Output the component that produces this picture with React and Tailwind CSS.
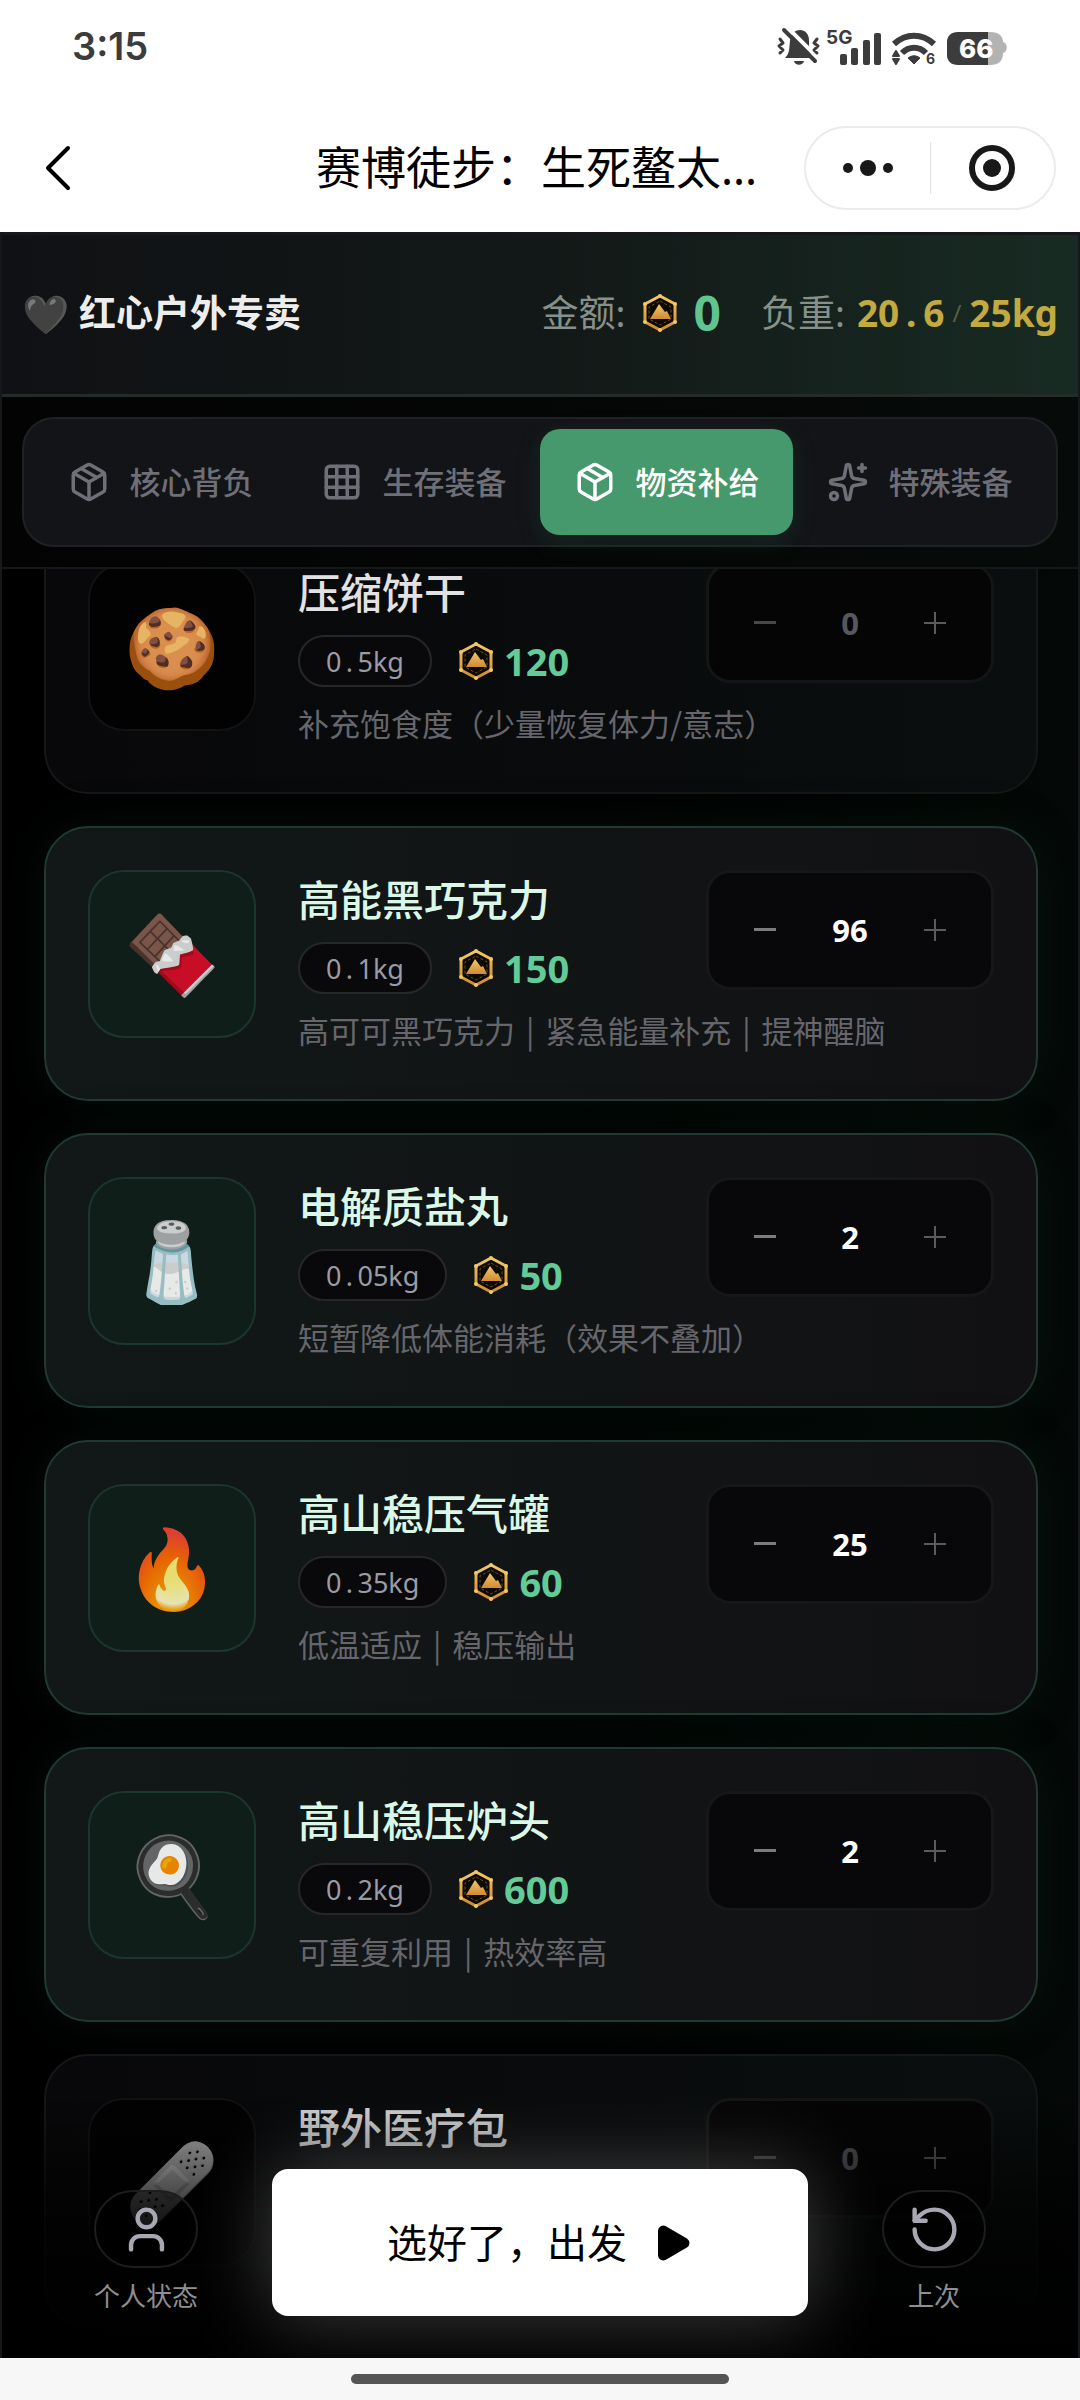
import { Fragment, useState } from "react";
import { Package, Grid3x3, Sparkles, User, RotateCcw, Play } from "lucide-react";

const TABS = [
  { id: "core", label: "核心背负", Icon: Package },
  { id: "survival", label: "生存装备", Icon: Grid3x3 },
  { id: "supply", label: "物资补给", Icon: Package },
  { id: "special", label: "特殊装备", Icon: Sparkles },
];

const ITEMS = [
  { name: "压缩饼干", emoji: "🍪", weight: "0.5", price: 120, count: 0, desc: ["补充饱食度（少量恢复体力/意志）"] },
  { name: "高能黑巧克力", emoji: "🍫", weight: "0.1", price: 150, count: 96, desc: ["高可可黑巧克力", "紧急能量补充", "提神醒脑"] },
  { name: "电解质盐丸", emoji: "🧂", weight: "0.05", price: 50, count: 2, desc: ["短暂降低体能消耗（效果不叠加）"] },
  { name: "高山稳压气罐", emoji: "🔥", weight: "0.35", price: 60, count: 25, desc: ["低温适应", "稳压输出"] },
  { name: "高山稳压炉头", emoji: "🍳", weight: "0.2", price: 600, count: 2, desc: ["可重复利用", "热效率高"] },
  { name: "野外医疗包", emoji: "🩹", count: 0, desc: [] },
];

function StatusBar() {
  return (
    <div className="flex h-23 shrink-0 items-center justify-between pr-16 pl-18 text-[#3c3c3c]">
      <span className="font-['Inter'] text-[38px] leading-none font-semibold">3:15</span>
      <svg className="h-10 w-60" viewBox="0 0 240 40" fill="none" aria-label="5G 66%">
        {/* muted bell */}
        <path d="M9 32c5-5 4-10 5-17C15 7 20 4 24 4c5 0 9 4 9 10 0 7 0 13 4 18z" fill="#3c3c3c" />
        <path d="M18 35h10c-1 5-9 5-10 0z" fill="#3c3c3c" />
        <path d="M11 1l31 31" stroke="#fff" strokeWidth="4" />
        <path d="M8 4l31 31" stroke="#3c3c3c" strokeWidth="4" strokeLinecap="round" />
        <path d="M4 13l3 4-4 3 4 4-3 3M41 13l-3 4 4 3-4 4 3 3" stroke="#3c3c3c" strokeWidth="3" strokeLinecap="round" strokeLinejoin="round" />
        <text x="50" y="18" fontFamily="Inter" fontSize="19" fontWeight="700" fill="#3c3c3c">5G</text>
        <rect x="64" y="28" width="7" height="11" rx="2" fill="#3c3c3c" />
        <rect x="75" y="22" width="7" height="17" rx="2" fill="#3c3c3c" />
        <rect x="87" y="14" width="7" height="25" rx="2" fill="#3c3c3c" />
        <rect x="98" y="7" width="7" height="32" rx="2" fill="#3c3c3c" />
        {/* wifi */}
        <path d="M118 18c12-11 28-11 40 0" stroke="#3c3c3c" strokeWidth="6" />
        <path d="M126 27c7-7 17-7 24 0" stroke="#3c3c3c" strokeWidth="6" />
        <path d="M132 32c4-3 8-3 12 0l-6 6z" fill="#3c3c3c" stroke="#3c3c3c" strokeLinejoin="round" />
        <path d="M120 25l3 5h-6zM120 38l3-5h-6z" fill="#3c3c3c" stroke="#3c3c3c" strokeWidth="2" strokeLinejoin="round" />
        <text x="150" y="38" fontFamily="Inter" fontSize="14" fontWeight="700" fill="#3c3c3c">6</text>
        {/* battery */}
        <path d="M207 6h7c9 0 13 4 13 10 5 1 5 10 0 11 0 8-4 12-13 12h-7z" fill="#b3b3b3" />
        <path d="M182 6h30v33h-30c-7 0-11-4-11-10V16c0-6 4-10 11-10z" fill="#3c3c3c" />
        <text x="183" y="32" fontFamily="Inter" fontSize="26" fontWeight="800" fill="#fff">66</text>
      </svg>
    </div>
  );
}

function TitleBar() {
  return (
    <div className="flex h-35 shrink-0 items-center justify-between pt-3 pr-6 pl-9">
      <button aria-label="返回" className="flex w-55">
        <svg className="h-13 w-12" viewBox="0 0 48 52" fill="none" stroke="#000" strokeWidth="4" strokeLinecap="round" strokeLinejoin="round">
          <path d="M32 6L12 26l20 20" />
        </svg>
      </button>
      <h1 className="flex-1 pl-15 text-[45px] leading-normal whitespace-nowrap text-black">赛博徒步：生死鳌太...</h1>
      <div className="flex h-21 w-63 items-center rounded-full border-2 border-[#ebebeb]">
        <button aria-label="更多" className="flex h-full flex-1 items-center justify-center">
          <svg className="h-5 w-13" viewBox="0 0 52 20" fill="#181818">
            <circle cx="6" cy="10" r="5" />
            <circle cx="26" cy="10" r="8" />
            <circle cx="46" cy="10" r="5" />
          </svg>
        </button>
        <span className="h-13 w-px bg-[#e2e2e2]" />
        <button aria-label="关闭" className="flex h-full flex-1 items-center justify-center">
          <svg className="size-12" viewBox="0 0 48 48" fill="none">
            <circle cx="24" cy="24" r="20" stroke="#181818" strokeWidth="6" />
            <circle cx="24" cy="24" r="9" fill="#181818" />
          </svg>
        </button>
      </div>
    </div>
  );
}

function Coin() {
  return (
    <svg className="h-10 w-9 shrink-0" viewBox="0 0 36 40" fill="none" aria-hidden="true">
      <defs>
        <linearGradient id="gold" x1="0" y1="0" x2="0" y2="1">
          <stop offset="0" stopColor="#f3c766" />
          <stop offset="1" stopColor="#d08a35" />
        </linearGradient>
      </defs>
      <path d="M18 3L33 11v18L18 37 3 29V11z" fill="#0c0a06" stroke="url(#gold)" strokeWidth="3" strokeLinejoin="round" />
      <path d="M18 8l11 6v12l-11 6-11-6V14z" stroke="#6e4c1c" strokeWidth="1" strokeDasharray="3 2" />
      <path d="M17 11l6 8 2-1 4 8H8z" fill="url(#gold)" />
      <g fill="#f3c766">
        <circle cx="18" cy="3" r="2" />
        <circle cx="33" cy="11" r="2" />
        <circle cx="33" cy="29" r="2" />
        <circle cx="18" cy="37" r="2" />
        <circle cx="3" cy="29" r="2" />
        <circle cx="3" cy="11" r="2" />
      </g>
    </svg>
  );
}

function ShopHeader() {
  return (
    <header className="flex h-[162px] shrink-0 items-center justify-between border-b-3 border-[#242c2a] bg-linear-to-r from-[#101114] via-[#121817] to-[#182b23] px-5 pb-1 text-[37px] leading-none whitespace-nowrap">
      <div className="flex items-center gap-2.5 font-bold text-[#ededed]">
        <span className="text-[38px]">🖤</span>
        <h2>红心户外专卖</h2>
      </div>
      <div className="flex items-center text-[#879089]">
        <span>金额:</span>
        <span className="ml-4 flex items-center gap-4">
          <Coin />
          <span className="text-[48px] font-bold text-[#5fc492]">0</span>
        </span>
        <span className="ml-10">负重:</span>
        <span className="ml-3 font-bold text-[#c2a940]">
          20<span className="inline-block w-6 text-center">.</span>6
        </span>
        <span className="mx-2 text-2xl text-[#5d5d3a]">/</span>
        <span className="font-bold text-[#c2a940]">25kg</span>
      </div>
    </header>
  );
}

function Tabs({ active, onSelect }) {
  return (
    <nav className="shrink-0 border-b-2 border-[#151818] bg-linear-to-r from-[#030303] to-[#060b09] px-5 py-5">
      <div role="tablist" className="grid grid-cols-4 rounded-[32px] border-2 border-[#202124] bg-[#131417] p-2.5">
        {TABS.map(({ id, label, Icon }) => (
          <button
            key={id}
            role="tab"
            aria-selected={id === active}
            onClick={() => onSelect(id)}
            className={
              "flex h-[106px] items-center justify-center gap-5 rounded-[20px] text-[31px] font-medium whitespace-nowrap " +
              (id === active ? "bg-[#46996c] text-white shadow-[0_6px_24px_rgba(40,120,80,0.2)]" : "text-[#6f6f77]")
            }
          >
            <Icon size={42} strokeWidth={2} className="shrink-0" />
            {label}
          </button>
        ))}
      </div>
    </nav>
  );
}

function Weight({ value }) {
  const [whole, fraction] = value.split(".");
  return (
    <span className="flex h-13 items-center rounded-full border-2 border-[#27272a] bg-[#09090b] px-6.5 text-[27px] leading-none text-[#9b9ba3]">
      {whole}
      <span className="inline-block w-4 text-center">.</span>
      {fraction}kg
    </span>
  );
}

function Stepper({ name, count, onChange }) {
  const lit = count > 0;
  return (
    <div
      className={
        "flex h-30 w-72 shrink-0 items-center justify-between rounded-3xl border-3 px-8 " +
        (lit ? "border-[#161719] bg-[#08080a]" : "border-[#131516] bg-[#050505]")
      }
    >
      <button
        aria-label={"减少" + name}
        onClick={() => onChange(Math.max(0, count - 1))}
        className={"flex size-12 items-center justify-center " + (lit ? "text-[#7c7c80]" : "text-[#48484b]")}
      >
        <svg className="h-1 w-6" viewBox="0 0 24 4" fill="currentColor">
          <rect x="1" width="22" height="3" />
        </svg>
      </button>
      <output className={"w-20 text-center text-[31px] leading-none font-bold " + (lit ? "text-white" : "text-[#57575c]")}>{count}</output>
      <button
        aria-label={"增加" + name}
        onClick={() => onChange(count + 1)}
        className="flex size-12 items-center justify-center text-[#5a5a5f]"
      >
        <svg className="size-6" viewBox="0 0 24 24" stroke="currentColor" strokeWidth="2">
          <path d="M1 12h22M12 1v22" />
        </svg>
      </button>
    </div>
  );
}

function ItemCard({ item }) {
  const [count, setCount] = useState(item.count);
  const lit = count > 0;
  return (
    <li
      className={
        "flex h-[275px] items-start gap-10.5 rounded-[44px] border-2 p-10.5 " +
        (lit
          ? "border-[#203a33] bg-linear-to-r from-[#111817] to-[#111113] shadow-[0_0_50px_rgba(20,70,52,0.2)]"
          : "border-[#151718] bg-linear-to-r from-[#08080a] to-[#0a0e0e]")
      }
    >
      <div
        className={
          "flex size-42 shrink-0 items-center justify-center rounded-[36px] border-2 pb-1 text-[77px] leading-none " +
          (lit ? "border-[#1c352e] bg-[#101e1a]" : "border-[#111213] bg-[#020203]")
        }
      >
        <span className={item.emoji === "🩹" ? "opacity-80 grayscale" : "opacity-90"}>{item.emoji}</span>
      </div>
      <div className="min-w-0 flex-1">
        <div className="flex items-start justify-between">
          <div className="pt-1">
            <h3 className={"text-[42px] leading-[52px] font-medium " + (lit ? "text-[#dbf7e8]" : "text-[#e2e2e4]")}>{item.name}</h3>
            {item.weight && (
              <div className="mt-4 flex items-center gap-6.5">
                <Weight value={item.weight} />
                <span className="flex items-center gap-2.5 text-[38px] leading-none font-bold text-[#62cb97]">
                  <Coin />
                  {item.price}
                </span>
              </div>
            )}
          </div>
          <Stepper name={item.name} count={count} onChange={setCount} />
        </div>
        <p className="mt-4 font-['Noto_Sans_CJK_SC'] text-[31px] leading-10 whitespace-nowrap text-[#66666c]">
          {item.desc.map((part, i) => (
            <Fragment key={part}>
              {i > 0 && <span className="px-1"> | </span>}
              {part}
            </Fragment>
          ))}
        </p>
      </div>
    </li>
  );
}

function SideAction({ label, Icon }) {
  return (
    <button className="flex w-26 flex-col items-center gap-3 pb-1 text-[26px] leading-8 whitespace-nowrap text-[#8e8e93]">
      <span className="flex h-19.5 w-26 items-center justify-center rounded-full border-2 border-[#1d1d1f] bg-black/50 text-[#a9a8b2]">
        <Icon size={53} strokeWidth={2} />
      </span>
      {label}
    </button>
  );
}

export default function App() {
  const [tab, setTab] = useState("supply");
  return (
    <div className="flex h-screen min-h-[900px] flex-col bg-white font-['Noto_Sans','Noto_Sans_CJK_SC',sans-serif]">
      <StatusBar />
      <TitleBar />
      <div className="flex min-h-0 flex-1 flex-col border-x-2 border-t-3 border-[#17181b] bg-black">
        <ShopHeader />
        <Tabs active={tab} onSelect={setTab} />
        <main className="relative min-h-0 flex-1 overflow-hidden bg-linear-to-r from-black to-[#040806]">
          <ul className="-mt-12.5 flex flex-col gap-8 pr-10 pl-10.5">
            {ITEMS.map((item) => (
              <ItemCard key={item.name} item={item} />
            ))}
          </ul>
          <div className="absolute inset-x-0 bottom-0 flex items-end justify-center bg-linear-to-t from-black via-black/75 to-transparent px-23 pt-20 pb-10.5">
            <div className="flex flex-1 justify-start">
              <SideAction label="个人状态" Icon={User} />
            </div>
            <button className="flex h-[147px] w-134 items-center justify-center gap-6 rounded-2xl bg-white text-[40px] text-black shadow-[0_0_80px_rgba(255,255,255,0.25)]">
              选好了，出发
              <Play size={42} fill="currentColor" />
            </button>
            <div className="flex flex-1 justify-end">
              <SideAction label="上次" Icon={RotateCcw} />
            </div>
          </div>
        </main>
      </div>
      <div className="flex h-10.5 shrink-0 items-center justify-center bg-[#f7f7f7]">
        <span className="h-2.5 w-[35%] rounded-full bg-[#555]" />
      </div>
    </div>
  );
}
